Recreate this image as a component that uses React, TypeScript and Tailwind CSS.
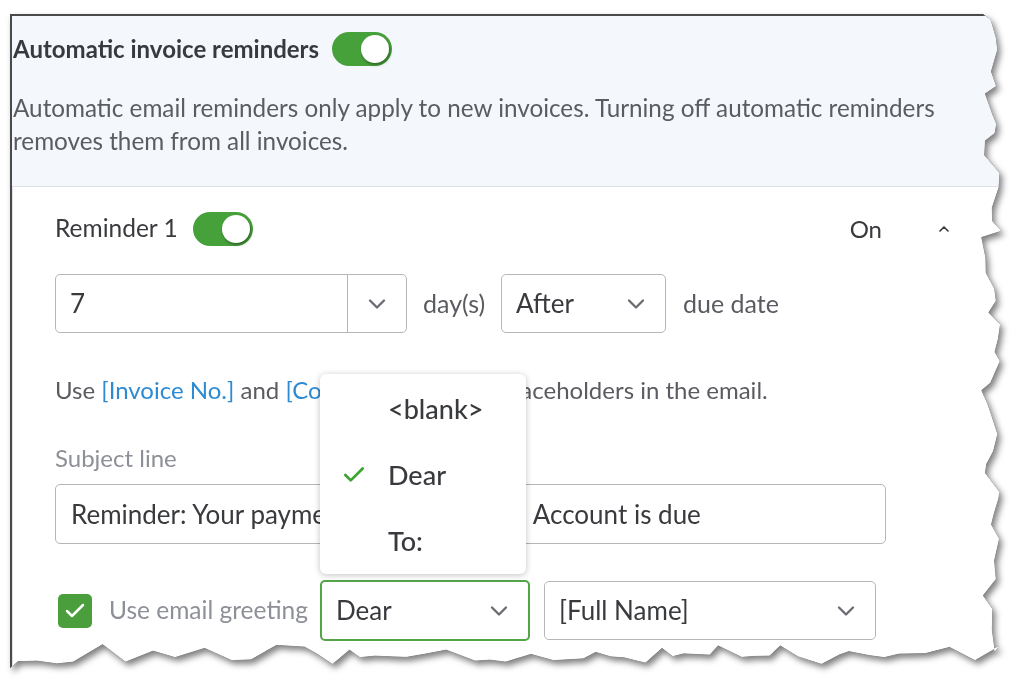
import { Check, ChevronDown, ChevronUp } from "lucide-react";

const FONT = "font-['Lato','Open_Sans',sans-serif]";

// seeded random so the torn edge looks the same on every load
function makeRandom(seed: number) {
  let s = seed;
  return () => {
    s = (s * 16807) % 2147483647;
    return (s - 1) / 2147483646;
  };
}

function tornClipPath(width: number, height: number) {
  const rand = makeRandom(42);
  const pts: string[] = ["0px 0px", `${width - 22}px 0px`];
  let y = 0;
  while (y < height - 30) {
    y += 6 + rand() * 16;
    const x = width - 4 - rand() * 20;
    pts.push(`${x.toFixed(1)}px ${y.toFixed(1)}px`);
  }
  pts.push(`${width - 6}px ${height - 22}px`);
  pts.push(`${width - 30}px ${height - 8}px`);
  let x = width - 30;
  while (x > 20) {
    x -= 8 + rand() * 22;
    const yy = height - 4 - rand() * 20;
    pts.push(`${Math.max(x, 0).toFixed(1)}px ${yy.toFixed(1)}px`);
  }
  pts.push(`0px ${height}px`);
  return `polygon(${pts.join(", ")})`;
}

function Toggle() {
  return (
    <div className="flex h-[34px] w-[60px] shrink-0 items-center justify-end rounded-full bg-[#47a13b] p-[3px]">
      <div className="h-[28px] w-[28px] rounded-full bg-white shadow-[1px_2px_3px_rgba(0,0,0,0.35)]" />
    </div>
  );
}

function SelectBox({
  value,
  width,
  active = false,
  divider = false,
}: {
  value: string;
  width: string;
  active?: boolean;
  divider?: boolean;
}) {
  return (
    <div
      className={`flex h-[59px] shrink-0 items-center rounded-[5px] bg-white ${width} ${
        active ? "border-2 border-[#53a548]" : "border border-[#b4b6ba]"
      }`}
    >
      <span className="flex-1 whitespace-nowrap pl-[14px] text-[26px] text-[#393a3d]">
        {value}
      </span>
      {divider && <div className="h-full w-px bg-[#b4b6ba]" />}
      <div className="flex w-[58px] justify-center">
        <ChevronDown className="h-[28px] w-[28px] text-[#6b6c72]" strokeWidth={2} />
      </div>
    </div>
  );
}

export default function App() {
  return (
    <div className={`h-[691px] w-[1024px] overflow-hidden bg-white ${FONT}`}>
      <div className="ml-[10px] mt-[14px] [filter:drop-shadow(0_0_0.6px_#333)_drop-shadow(3px_4px_3px_rgba(0,0,0,0.5))]">
        <div
          className="flex h-[654px] w-[995px] flex-col border-l-2 border-t-2 border-[#4a4a4a] bg-white"
          style={{ clipPath: tornClipPath(995, 654) }}
        >
          {/* top settings block */}
          <div className="bg-[#f4f7fb] pb-[29px] pl-[1px] pt-[16px]">
            <div className="flex h-[34px] items-center gap-[13px]">
              <span className="text-[24px] font-bold text-[#393a3d]">
                Automatic invoice reminders
              </span>
              <Toggle />
            </div>
            <p className="mt-[25px] w-[950px] text-[24.25px] leading-[33px] text-[#5b5c61]">
              Automatic email reminders only apply to new invoices. Turning off
              automatic reminders removes them from all invoices.
            </p>
          </div>

          {/* reminder card */}
          <div className="flex-1 border-l border-t border-[#dcdfe4] bg-white pl-[42px] pt-[25px]">
            <div className="flex h-[33px] w-[897px] items-center">
              <span className="text-[24.5px] text-[#393a3d]">Reminder 1</span>
              <div className="ml-[15px]">
                <Toggle />
              </div>
              <span className="ml-auto text-[24px] text-[#393a3d]">On</span>
              <ChevronUp className="ml-[54px] h-[16px] w-[16px] text-[#393a3d]" strokeWidth={2.5} />
            </div>

            <div className="mt-[29px] flex items-center">
              <SelectBox value="7" width="w-[352px]" divider />
              <span className="ml-[16px] w-[78px] text-[25px] text-[#5b5c61]">
                day(s)
              </span>
              <SelectBox value="After" width="w-[165px]" />
              <span className="ml-[17px] text-[25px] text-[#5b5c61]">
                due date
              </span>
            </div>

            <p className="mt-[42px] whitespace-nowrap text-[24px] leading-[30px] text-[#5b5c61]">
              Use <span className="text-[#2d8bd4]">[Invoice No.]</span> and{" "}
              <span className="text-[#2d8bd4]">[Company Name]</span> as
              placeholders in the email.
            </p>

            <p className="mt-[38px] text-[24px] leading-[30px] text-[#8d9096]">
              Subject line
            </p>
            <div className="mt-[11px] flex h-[60px] w-[831px] items-center whitespace-nowrap rounded-[5px] border border-[#b4b6ba] pl-[15px] text-[26px] text-[#393a3d]">
              Reminder: Your payment to Craig's Shop Account is due
            </div>

            <div className="relative mt-[36px] flex items-center">
              <div className="ml-[3px] flex h-[34px] w-[34px] items-center justify-center rounded-[5px] bg-[#4a9e3c]">
                <Check className="h-[24px] w-[24px] text-white" strokeWidth={2.5} />
              </div>
              <span className="ml-[17px] w-[211px] whitespace-nowrap text-[24.5px] text-[#8d9096]">
                Use email greeting
              </span>
              <div className="relative">
                <SelectBox value="Dear" width="w-[210px] h-[61px]" active />
                <div className="absolute bottom-[67px] left-0 w-[206px] rounded-[6px] bg-white pt-[2px] shadow-[0_1px_6px_rgba(0,0,0,0.25)]">
                  {["<blank>", "Dear", "To:"].map((item) => (
                    <div key={item} className="flex h-[66px] items-center">
                      <div className="flex w-[68px] justify-center">
                        {item === "Dear" && (
                          <Check className="h-[26px] w-[26px] text-[#3ba52f]" strokeWidth={2.5} />
                        )}
                      </div>
                      <span className="text-[27px] font-medium text-[#393a3d]">
                        {item}
                      </span>
                    </div>
                  ))}
                </div>
              </div>
              <div className="ml-[14px]">
                <SelectBox value="[Full Name]" width="w-[332px] h-[58px]" />
              </div>
            </div>
          </div>
        </div>
      </div>
    </div>
  );
}
